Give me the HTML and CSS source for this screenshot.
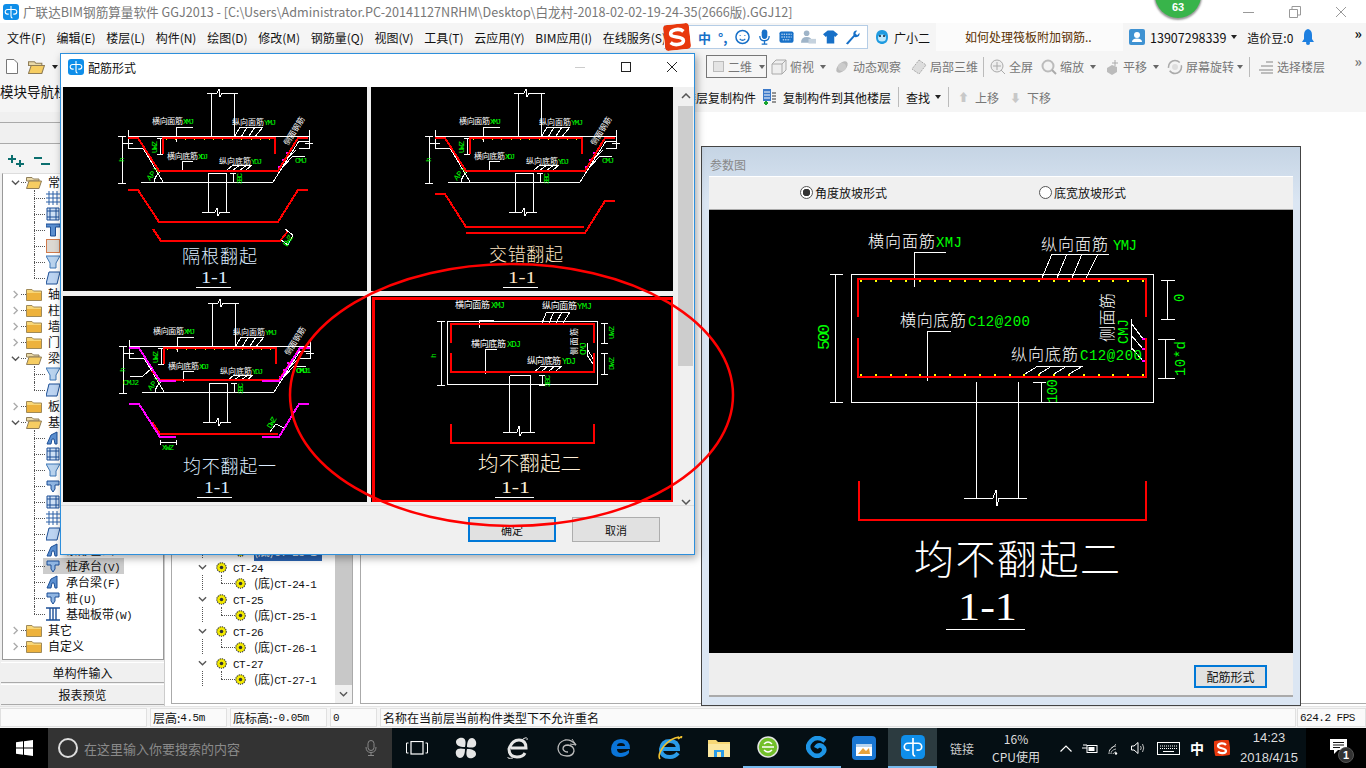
FILE: index.html
```html
<!DOCTYPE html>
<html lang="zh-CN">
<head>
<meta charset="utf-8">
<title>广联达BIM钢筋算量软件</title>
<link rel="stylesheet" href="styles.css">
</head>
<body>
<svg class="defs" width="0" height="0" aria-hidden="true">
  <defs>
    <symbol id="gld" viewBox="0 0 16 16"><rect width="16" height="16" rx="3" fill="#0f8ee9"/><path d="M8 2V12Q8 14 9.500 14M8 5.500H11.500A2.300 2.300 0 0 1 11.500 10.100H10.300M8 5.500H4.500A2.300 2.300 0 0 0 4.500 10.100H5.700" fill="none" stroke="#fff" stroke-width="1.100"/></symbol>
    <symbol id="folder" viewBox="0 0 16 14"><path d="M.5 2.5H6L7.5 4H15.5V13.5H.5Z" fill="#f8d676" stroke="#a08a58"/><path d="M1 6H15V13H1Z" fill="#edb23c"/></symbol>
    <symbol id="folderopen" viewBox="0 0 16 14"><path d="M.5 2.5H6L7.5 4H13V6H.5Z" fill="#e9d9a8" stroke="#8f7d58"/><path d="M3 6H15.5L13 13.5H.5Z" fill="#f6cd62" stroke="#8f7d58"/></symbol>
    <symbol id="i-grid" viewBox="0 0 14 14"><path d="M3 0V14M7 0V14M11 0V14M0 3H14M0 7H14M0 11H14" stroke="#2a60a8" fill="none"/></symbol>
    <symbol id="i-frame" viewBox="0 0 14 14"><path d="M1 1H13V13H1ZM4 4H10V10H4ZM1 4H4M10 4H13M1 10H4M10 10H13M4 1V4M10 1V4M4 10V13M10 10V13" fill="#cfe0f5" stroke="#1c4f96"/></symbol>
    <symbol id="i-t" viewBox="0 0 14 14"><path d="M0 1H14V4H9.5V13H4.5V4H0Z" fill="#5b8fd0" stroke="#1c4f96"/></symbol>
    <symbol id="i-sand" viewBox="0 0 14 14"><rect x=".5" y=".5" width="13" height="13" fill="#dcd8d2" stroke="#d07a4c"/></symbol>
    <symbol id="i-fun" viewBox="0 0 14 14"><path d="M0 1H14L10 8V13H4V8Z" fill="#b9d3ee" stroke="#3d77b5"/></symbol>
    <symbol id="i-slab" viewBox="0 0 14 14"><path d="M3 1H14L11 13H0Z" fill="#bcd4f2" stroke="#1c4f96"/></symbol>
    <symbol id="i-cap" viewBox="0 0 14 14"><path d="M1 13L5 4L11 1V13H9L8 8H6L5 13Z" fill="#5b8fd0" stroke="#1c4f96"/></symbol>
    <symbol id="i-pile" viewBox="0 0 14 14"><path d="M1 2H13V6H9V10L7 13L5 10V6H1Z" fill="#8fb5e2" stroke="#1c4f96"/></symbol>
    <symbol id="i-strip" viewBox="0 0 14 14"><path d="M0 1H14M0 13H14M4 1V13M7 1V13M10 1V13" fill="none" stroke="#1c4f96" stroke-width="1.4"/></symbol>
    <symbol id="ct" viewBox="0 0 10 10"><circle cx="5" cy="5" r="4.3" fill="#f3ea00" stroke="#333" stroke-dasharray="1.2 .8"/><circle cx="5" cy="5" r="1.6" fill="#333"/></symbol>
    <g id="slope-base">
      <path class="cw" d="M207 93H217L219 89L220 97L222 93H238M211 93V136M234 93V136M128 136H309M128 130V148H143L163 182M141 182H273L299 141H309M309 130V148H299M208 173H226M208 173V212M226 173V212M202 212H215L217 208L218 216L220 212H230"/>
      <path class="cw" d="M123 143H133M305 143H313M122 136V183M118 136H126M118 183H126M160 138V154M157 138H163M157 154H163M154 182Q155 176 160 172M233 173V182M230 173H236M230 182H236"/>
      <path class="cw" d="M193 127H176V142M240 127H263M233 139L240 127M240 139L247 127M247 139L255 127M253 139L263 127M193 161H182V172M233 165H252M227 170L233 165M233 170L240 165M240 170L247 165M246 170L252 165M293 156H305M280 170L293 156M283 162L296 150"/>
      <circle class="mg" cx="287" cy="153" r=".8"/><circle class="mg" cx="283" cy="160" r=".8"/><circle class="mg" cx="279" cy="167" r=".8"/>
      <path class="cy" d="M166 139H274"/>
      <path class="cy" d="M162 170H277"/>
      <path class="cr" d="M163 154V138H275V154"/>
      <text class="tw" x="152" y="124" textLength="31">横向面筋</text><text class="tg" x="183" y="124" textLength="11">XMJ</text>
      <text class="tw" x="232" y="125" textLength="32">纵向面筋</text><text class="tg" x="264" y="125" textLength="12">YMJ</text>
      <text class="tw" x="167" y="159" textLength="31">横向底筋</text><text class="tg" x="198" y="159" textLength="10">XDJ</text>
      <text class="tw" x="219" y="164" textLength="32">纵向底筋</text><text class="tg" x="251" y="164" textLength="11">YDJ</text>
      <text class="tg" x="295" y="163" textLength="12">CMJ</text>
      <text class="tg" transform="translate(157 153) rotate(-90)" textLength="12">UWZ</text>
      <text class="tg" transform="translate(124 162) rotate(-90)">h</text>
      <text class="tg" transform="translate(150 181) rotate(-50)">AP)</text>
      <text class="tg" transform="translate(242 184) rotate(-90)" textLength="11">3BC</text>
      <text class="tw" transform="translate(288 146) rotate(-58)" textLength="32">侧面钢筋</text>
    </g>
  </defs>
</svg>

<div class="screen">
  <header class="titlebar">
    <svg class="ic16"><use href="#gld"/></svg>
    <span class="title-text">广联达BIM钢筋算量软件 GGJ2013 - [C:\Users\Administrator.PC-20141127NRHM\Desktop\白龙村-2018-02-02-19-24-35(2666版).GGJ12]</span>
    <div class="winctl">
      <svg width="12" height="12"><path d="M0 6.5H11" stroke="#999"/></svg>
      <svg width="12" height="12"><path d="M.5 3.5H8.5V11.5H.5ZM3 3V.5H11.5V9H9" fill="none" stroke="#999"/></svg>
      <svg width="12" height="12"><path d="M1 1L11 11M11 1L1 11" stroke="#999"/></svg>
    </div>
  </header>

  <nav class="menubar">
    <div class="menu-items">
      <span>文件(F)</span><span>编辑(E)</span><span>楼层(L)</span><span>构件(N)</span><span>绘图(D)</span><span>修改(M)</span><span>钢筋量(Q)</span><span>视图(V)</span><span>工具(T)</span><span>云应用(Y)</span><span>BIM应用(I)</span><span>在线服务(S)</span>
    </div>
    <div class="sogou">
      <svg class="sg-logo" viewBox="0 0 26 26"><rect width="26" height="26" rx="4" fill="#e8380d"/><path d="M20 8C16 4 7 5 7 9.500C7 14 19 12 19 17C19 21 10 22 6 18" fill="none" stroke="#fff" stroke-width="3.600"/></svg>
      <span class="sg-zh">中</span>
      <span class="sg-dot">°,</span>
      <svg class="sg" viewBox="0 0 16 16"><circle cx="8" cy="8" r="7" fill="#fff" stroke="#1770c8" stroke-width="1.600"/><path d="M5 10Q8 13 11 10M5.500 6V7M10.500 6V7" fill="none" stroke="#1770c8" stroke-width="1.400"/></svg>
      <svg class="sg" viewBox="0 0 16 16"><rect x="5" y="0" width="6" height="10" rx="3" fill="#1770c8"/><path d="M3 7Q3 12 8 12T13 7M8 12V16M5 15.500H11" fill="none" stroke="#1770c8" stroke-width="1.400"/></svg>
      <svg class="sg" viewBox="0 0 16 16"><rect x=".5" y="2" width="15" height="12" rx="2" fill="#1770c8"/><path d="M2.500 5H13.500M2.500 8H13.500M4 11H12" stroke="#fff" stroke-dasharray="1.500 1" fill="none"/></svg>
      <svg class="sg" viewBox="0 0 16 16"><circle cx="6" cy="4" r="3" fill="#9fb4c8"/><path d="M0 14Q0 8 6 8T12 14Z" fill="#9fb4c8"/><rect x="8" y="10" width="8" height="5" fill="#c5d2de"/></svg>
      <svg class="sg" viewBox="0 0 16 16"><path d="M5 1H11L16 5L13 8L12 7V15H4V7L3 8L0 5Z" fill="#1770c8"/></svg>
      <svg class="sg" viewBox="0 0 16 16"><path d="M1 15L9 6Q8 1 13 1L11 4L13 6L15.500 3.500Q16 9 10 8L3 16Z" fill="#1770c8"/></svg>
    </div>
    <svg class="ghost" viewBox="0 0 16 16"><path d="M8 1C3 1 2 5 2 8C2 13 5 15 8 15S14 13 14 8C14 5 13 1 8 1Z" fill="#1f9be0"/><ellipse cx="8" cy="9" rx="4" ry="3.500" fill="#bfe8fb"/><circle cx="6" cy="7" r="1" fill="#123"/><circle cx="10" cy="7" r="1" fill="#123"/></svg>
    <span class="xiao">广小二</span>
    <div class="tip">如何处理筏板附加钢筋..</div>
    <svg class="avatar" viewBox="0 0 16 16"><rect width="16" height="16" rx="2" fill="#3f92d2"/><circle cx="8" cy="6" r="3" fill="#fff"/><path d="M3 13Q3 9.500 8 9.500T13 13Z" fill="#fff"/></svg>
    <span class="phone">13907298339</span><i class="caret dark"></i>
    <span class="bean">造价豆:0</span>
    <svg class="bell" viewBox="0 0 12 16"><path d="M6 0Q10 1 10 6V10L12 13H0L2 10V6Q2 1 6 0Z" fill="#1d7fe0"/><circle cx="6" cy="14" r="2" fill="#1d7fe0"/></svg>
    <span class="more">»</span>
  </nav>

  <div class="tb1">
    <div class="tb1-left">
      <svg width="12" height="15"><path d="M.5 .5H8L11.500 4V14.500H.5Z" fill="#fff" stroke="#777"/></svg>
      <svg width="17" height="15"><use href="#folderopen"/></svg>
      <i class="caret dark"></i>
    </div>
    <div class="mode"><span class="mode-box"></span><span>二维</span><i class="caret"></i></div>
    <div class="ti first"><svg class="tic" viewBox="0 0 16 16"><path d="M1 5L5 1H15V11L11 15H1ZM1 5H11V15M11 5L15 1" fill="#eee" stroke="#aaa"/></svg><span>俯视</span></div><i class="caret tight"></i>
    <div class="ti"><svg class="tic" viewBox="0 0 16 16"><ellipse cx="8" cy="8" rx="4" ry="7" transform="rotate(45 8 8)" fill="#bbb"/><circle cx="8" cy="8" r="4" fill="#ccc"/></svg><span>动态观察</span></div>
    <div class="ti sp2"><svg class="tic" viewBox="0 0 16 16"><path d="M8 1L15 6L8 15L1 10Z" fill="#ddd" stroke="#aaa" stroke-dasharray="2 1"/></svg><span>局部三维</span></div>
    <i class="sep s3"></i>
    <div class="ti m2"><svg class="tic" viewBox="0 0 16 16"><circle cx="7" cy="7" r="6" fill="#eee" stroke="#aaa"/><path d="M7 3V11M3 7H11M11 11L15 15" stroke="#aaa" fill="none"/></svg><span>全屏</span></div>
    <div class="ti"><svg class="tic" viewBox="0 0 16 16"><circle cx="7" cy="7" r="5.500" fill="#f3f3f3" stroke="#bbb" stroke-width="2"/><path d="M11 11L15 15" stroke="#aaa" stroke-width="2"/></svg><span>缩放</span></div><i class="caret tight"></i>
    <div class="ti"><svg class="tic" viewBox="0 0 16 16"><path d="M3 9L8 6L13 8V13L8 16L3 13Z" fill="#bbb"/><path d="M11 1V7M8 4H14" stroke="#aaa"/></svg><span>平移</span></div><i class="caret tight"></i>
    <div class="ti"><svg class="tic" viewBox="0 0 16 16"><circle cx="8" cy="8" r="6.500" fill="#f3f3f3" stroke="#aaa" stroke-width="1.500" stroke-dasharray="16 3"/><circle cx="8" cy="8" r="3" fill="#ddd"/></svg><span>屏幕旋转</span></div><i class="caret tighter"></i>
    <i class="sep s2"></i>
    <div class="ti"><svg class="tic" viewBox="0 0 16 16"><path d="M8 3H15M3 7H15M1 11H15M3 14H15" stroke="#aaa" stroke-width="1.500" fill="none"/></svg><span>选择楼层</span></div>
    <span class="more">»</span>
  </div>

  <div class="tb2">
    <div class="tb2-left"><span class="navtitle">模块导航栏</span></div>
    <span>楼层复制构件</span>
    <svg class="copy" viewBox="0 0 13 16"><rect x="0" y="0" width="8" height="12" fill="#3b79c9"/><path d="M1 3H7M1 6H7M1 9H7" stroke="#fff"/><path d="M3 12V16M1 14H5" stroke="#1aa531" stroke-width="2"/><path d="M9 4H13M9 7H13M9 10H13M9 13H13" stroke="#333"/></svg>
    <span>复制构件到其他楼层</span>
    <i class="sep"></i>
    <span>查找</span><i class="caret dark tight2"></i>
    <i class="sep"></i>
    <span class="arrow">⬆</span><span class="dis">上移</span>
    <span class="arrow">⬇</span><span class="dis">下移</span>
  </div>

  <main class="work">
    <aside class="nav">
      <div class="navtab t1"></div>
      <div class="navtab t2"></div>
      <div class="navtools">
        <svg width="20" height="12"><path d="M1 4H9M5 0V8M9 9H17M13 5V13" stroke="#0b6e6e" stroke-width="2"/></svg>
        <svg width="18" height="12"><path d="M0 3H8M7 9H16" stroke="#0b6e6e" stroke-width="2"/></svg>
      </div>
      <div class="tree">
        <div class="row folder open"><svg class="chev" viewBox="0 0 10 10"><path d="M1 3L5 7L9 3" fill="none" stroke="#555" stroke-width="1.500"/></svg><svg class="fd"><use href="#folderopen"/></svg><span>常用构件类型</span></div>
        <div class="row leaf"><svg class="li"><use href="#i-grid"/></svg><span>轴网</span></div>
        <div class="row leaf"><svg class="li"><use href="#i-frame"/></svg><span>框架柱</span></div>
        <div class="row leaf"><svg class="li"><use href="#i-t"/></svg><span>框架梁</span></div>
        <div class="row leaf"><svg class="li"><use href="#i-sand"/></svg><span>现浇板</span></div>
        <div class="row leaf"><svg class="li"><use href="#i-fun"/></svg><span>板受力筋</span></div>
        <div class="row leaf last"><svg class="li"><use href="#i-slab"/></svg><span>板负筋</span></div>
        <div class="row folder"><svg class="chev" viewBox="0 0 10 10"><path d="M3 1L7 5L3 9" fill="none" stroke="#aaa" stroke-width="1.500"/></svg><svg class="fd"><use href="#folder"/></svg><span>轴线</span></div>
        <div class="row folder"><svg class="chev" viewBox="0 0 10 10"><path d="M3 1L7 5L3 9" fill="none" stroke="#aaa" stroke-width="1.500"/></svg><svg class="fd"><use href="#folder"/></svg><span>柱</span></div>
        <div class="row folder"><svg class="chev" viewBox="0 0 10 10"><path d="M3 1L7 5L3 9" fill="none" stroke="#aaa" stroke-width="1.500"/></svg><svg class="fd"><use href="#folder"/></svg><span>墙</span></div>
        <div class="row folder"><svg class="chev" viewBox="0 0 10 10"><path d="M3 1L7 5L3 9" fill="none" stroke="#aaa" stroke-width="1.500"/></svg><svg class="fd"><use href="#folder"/></svg><span>门窗洞</span></div>
        <div class="row folder open"><svg class="chev" viewBox="0 0 10 10"><path d="M1 3L5 7L9 3" fill="none" stroke="#555" stroke-width="1.500"/></svg><svg class="fd"><use href="#folderopen"/></svg><span>梁</span></div>
        <div class="row leaf"><svg class="li"><use href="#i-fun"/></svg><span>梁</span></div>
        <div class="row leaf last"><svg class="li"><use href="#i-slab"/></svg><span>圈梁</span></div>
        <div class="row folder"><svg class="chev" viewBox="0 0 10 10"><path d="M3 1L7 5L3 9" fill="none" stroke="#aaa" stroke-width="1.500"/></svg><svg class="fd"><use href="#folder"/></svg><span>板</span></div>
        <div class="row folder open"><svg class="chev" viewBox="0 0 10 10"><path d="M1 3L5 7L9 3" fill="none" stroke="#555" stroke-width="1.500"/></svg><svg class="fd"><use href="#folderopen"/></svg><span>基础</span></div>
        <div class="row leaf"><svg class="li"><use href="#i-cap"/></svg><span>基础梁</span></div>
        <div class="row leaf"><svg class="li"><use href="#i-frame"/></svg><span>筏板基础</span></div>
        <div class="row leaf"><svg class="li"><use href="#i-fun"/></svg><span>集水坑</span></div>
        <div class="row leaf"><svg class="li"><use href="#i-pile"/></svg><span>柱墩</span></div>
        <div class="row leaf"><svg class="li"><use href="#i-frame"/></svg><span>筏板主筋</span></div>
        <div class="row leaf"><svg class="li"><use href="#i-grid"/></svg><span>筏板负筋</span></div>
        <div class="row leaf"><svg class="li"><use href="#i-slab"/></svg><span>独立基础</span></div>
        <div class="row leaf"><svg class="li"><use href="#i-cap"/></svg><span>条形基础</span></div>
        <div class="row leaf sel"><svg class="li"><use href="#i-pile"/></svg><span>桩承台<b>(V)</b></span></div>
        <div class="row leaf"><svg class="li"><use href="#i-cap"/></svg><span>承台梁<b>(F)</b></span></div>
        <div class="row leaf"><svg class="li"><use href="#i-pile"/></svg><span>桩<b>(U)</b></span></div>
        <div class="row leaf last"><svg class="li"><use href="#i-strip"/></svg><span>基础板带<b>(W)</b></span></div>
        <div class="row folder"><svg class="chev" viewBox="0 0 10 10"><path d="M3 1L7 5L3 9" fill="none" stroke="#aaa" stroke-width="1.500"/></svg><svg class="fd"><use href="#folder"/></svg><span>其它</span></div>
        <div class="row folder"><svg class="chev" viewBox="0 0 10 10"><path d="M3 1L7 5L3 9" fill="none" stroke="#aaa" stroke-width="1.500"/></svg><svg class="fd"><use href="#folder"/></svg><span>自定义</span></div>
      </div>
      <button class="navbtn">单构件输入</button>
      <button class="navbtn">报表预览</button>
    </aside>

    <section class="list">
      <div class="list-rows">
        <div class="ct child hl"><svg class="cti"><use href="#ct"/></svg><span>(底)<b>CT-23-1</b></span></div>
        <div class="ct"><svg class="chev2" viewBox="0 0 10 6"><path d="M1 1L5 5L9 1" fill="none" stroke="#555" stroke-width="1.500"/></svg><svg class="cti"><use href="#ct"/></svg><b>CT-24</b></div>
        <div class="ct child"><svg class="cti"><use href="#ct"/></svg><span>(底)<b>CT-24-1</b></span></div>
        <div class="ct"><svg class="chev2" viewBox="0 0 10 6"><path d="M1 1L5 5L9 1" fill="none" stroke="#555" stroke-width="1.500"/></svg><svg class="cti"><use href="#ct"/></svg><b>CT-25</b></div>
        <div class="ct child"><svg class="cti"><use href="#ct"/></svg><span>(底)<b>CT-25-1</b></span></div>
        <div class="ct"><svg class="chev2" viewBox="0 0 10 6"><path d="M1 1L5 5L9 1" fill="none" stroke="#555" stroke-width="1.500"/></svg><svg class="cti"><use href="#ct"/></svg><b>CT-26</b></div>
        <div class="ct child"><svg class="cti"><use href="#ct"/></svg><span>(底)<b>CT-26-1</b></span></div>
        <div class="ct"><svg class="chev2" viewBox="0 0 10 6"><path d="M1 1L5 5L9 1" fill="none" stroke="#555" stroke-width="1.500"/></svg><svg class="cti"><use href="#ct"/></svg><b>CT-27</b></div>
        <div class="ct child"><svg class="cti"><use href="#ct"/></svg><span>(底)<b>CT-27-1</b></span></div>
      </div>
      <div class="vscroll"><div class="vthumb"></div><svg class="vdown" viewBox="0 0 10 6"><path d="M1 1L5 5L9 1" fill="none" stroke="#555" stroke-width="1.500"/></svg></div>
    </section>

    <section class="canvas"></section>
  </main>

  <footer class="status">
    <div class="cell c0"></div>
    <div class="cell c1">层高:<b>4.5m</b></div>
    <div class="cell c2">底标高:<b>-0.05m</b></div>
    <div class="cell c3"><b>0</b></div>
    <div class="cell c4">名称在当前层当前构件类型下不允许重名</div>
    <div class="cell c5"><b>624.2 FPS</b></div>
  </footer>

  <div class="taskbar">
    <div class="start"><svg width="17" height="16" viewBox="0 0 17 16"><path d="M0 2.300L7 1.300V7.500H0ZM8 1.200L17 0V7.500H8ZM0 8.500H7V14.700L0 13.700ZM8 8.500H17V16L8 14.800Z" fill="#fff"/></svg></div>
    <div class="search">
      <span class="cortana"></span><span class="stext">在这里输入你要搜索的内容</span>
      <svg class="mic" width="12" height="16" viewBox="0 0 12 16"><rect x="3" y=".5" width="6" height="10" rx="3" fill="none" stroke="#888"/><path d="M1 7Q1 12.500 6 12.500T11 7M6 12.500V15.500M3 15.500H9" fill="none" stroke="#888"/></svg>
    </div>
    <div class="tasks">
      <div class="task"><svg width="22" height="14" viewBox="0 0 22 14"><rect x="5" y=".5" width="12" height="12.500" fill="none" stroke="#fff" stroke-width="1.200"/><path d="M2.500 2H.5V12H2.500M19.500 2H21.500V12H19.500" fill="none" stroke="#fff"/></svg></div>
      <div class="task"><svg width="22" height="22" viewBox="0 0 22 22"><path d="M10 10C4 10 1 8 1 5S5 0 8 1 11 6 10 10ZM12 10C12 4 14 1 17 1S22 5 21 8 16 11 12 10ZM12 12C18 12 21 14 21 17S17 22 14 21 11 16 12 12ZM10 12C10 18 8 21 5 21S0 17 1 14 6 11 10 12Z" fill="#e6e6e6"/></svg></div>
      <div class="task"><svg width="22" height="24" viewBox="0 0 22 24"><path d="M4 12H19Q19 4 12 4T2 13Q2 21 10 21Q16 21 18 17" fill="none" stroke="#e6e6e6" stroke-width="3"/><path d="M1 21Q0 23 6 22M16 3Q21 0 20 4" fill="none" stroke="#e6e6e6"/></svg></div>
      <div class="task"><svg width="20" height="20" viewBox="0 0 20 20"><path d="M19 7Q14 1 8 2Q1 4 1 11Q2 18 10 18Q16 18 17 13Q17 8 11 7Q6 7 6 11Q7 14 11 14" fill="none" stroke="#bbb" stroke-width="1.300"/><path d="M15 1L19 7L13 6" fill="none" stroke="#bbb"/></svg></div>
      <div class="task"><svg width="22" height="22" viewBox="0 0 22 22"><path d="M3 12H20Q20 2 11 2T1 12Q1 20 10 20Q16 20 19 16V13Q15 16 11 16Q7 16 7 12ZM7 9Q7 6 11 6T15 9Z" fill="#0a74d8" fill-rule="evenodd"/></svg></div>
      <div class="task"><svg width="26" height="26" viewBox="0 0 26 26"><path d="M5 14H21Q21 6 13 6T4 14Q4 22 13 22Q18 22 21 18" fill="none" stroke="#2a9be8" stroke-width="4"/><path d="M21 4Q26 0 24 3M3 24Q0 20 7 11Q14 3 22 2" fill="none" stroke="#f2c230" stroke-width="1.600"/></svg></div>
      <div class="task"><svg width="22" height="18" viewBox="0 0 22 18"><path d="M0 1H8L10 3H22V18H0Z" fill="#f6d776"/><rect x="0" y="5" width="22" height="13" fill="#fbe7a0"/><rect x="6" y="11" width="10" height="7" fill="#2a9be8"/><rect x="9" y="13" width="4" height="5" fill="#fbe7a0"/></svg></div>
      <div class="task"><svg width="22" height="22" viewBox="0 0 22 22"><circle cx="11" cy="11" r="10" fill="#72bf2a" stroke="#e5e5e5" stroke-width="1.500"/><path d="M5 11H17M7 8Q11 4 15 8M7 14Q11 18 15 14" fill="none" stroke="#fff" stroke-width="1.500"/></svg></div>
      <div class="task"><svg width="22" height="22" viewBox="0 0 22 22"><path d="M19 5Q11 -1 5 5Q-1 11 5 17Q11 23 17 17Q20 13 16 10Q12 8 10 12" fill="none" stroke="#1e95e6" stroke-width="4.500"/></svg></div>
      <div class="task"><svg width="24" height="24" viewBox="0 0 24 24"><rect width="24" height="24" rx="4" fill="#1976d2"/><path d="M4 8H20V20H4Z" fill="#fff"/><path d="M4 8H20V11H4Z" fill="#b7d4f0"/><path d="M6 18L11 12L14 15L17 12L18 18Z" fill="#e8a33c"/></svg></div>
      <div class="task active"><svg width="24" height="24"><use href="#gld"/></svg></div>
    </div>
    <div class="linktxt">链接</div>
    <div class="cpu"><span>16%</span><span>CPU使用</span></div>
    <div class="tray">
      <svg width="12" height="7" viewBox="0 0 12 7"><path d="M.5 6.500L6 1L11.500 6.500" fill="none" stroke="#fff" stroke-width="1.200"/></svg>
      <svg width="16" height="10" viewBox="0 0 16 10"><rect x="5" y="2.500" width="10" height="7" fill="none" stroke="#fff"/><rect x="6.500" y="4" width="6" height="4" fill="#fff"/><path d="M0 5H5M2 1V3M4 1V3" stroke="#fff"/></svg>
      <svg width="13" height="13" viewBox="0 0 13 13"><path d="M1 12Q1 5 8 4M3 12Q3 8 8 7M5 12Q6 10 8 10M1 9L8 2" fill="none" stroke="#ddd" stroke-dasharray="1.500 .5"/><circle cx="8" cy="11.500" r="1.200" fill="#fff"/></svg>
      <svg width="16" height="12" viewBox="0 0 16 12"><path d="M.5 4H3L7 .5V11.500L3 8H.5Z" fill="none" stroke="#fff"/><path d="M9.500 4Q11 6 9.500 8M11.500 2Q14 6 11.500 10" fill="none" stroke="#bbb"/></svg>
      <svg width="23" height="13" viewBox="0 0 23 13"><rect x=".5" y=".5" width="22" height="12" fill="none" stroke="#fff"/><path d="M3 4H20M3 6.500H20" stroke="#fff" stroke-dasharray="1 1"/><path d="M6 9.500H17" stroke="#fff"/></svg>
      <span class="tray-zh">中</span>
      <svg width="16" height="16" viewBox="0 0 16 16"><rect width="16" height="16" rx="3" fill="#e8380d" transform="rotate(-8 8 8)"/><path d="M12 5C10 2.500 4 3 4 6C4 9 12 7.500 12 11C12 13.500 6 14 4 11.500" fill="none" stroke="#fff" stroke-width="2.200"/></svg>
    </div>
    <div class="clock"><span>14:23</span><span>2018/4/15</span></div>
    <div class="notice"><svg width="17" height="15" viewBox="0 0 17 15"><path d="M0 0H17V11H8L4 15V11H0Z" fill="#fff"/><path d="M3 3.500H14M3 6H14M3 8.500H10" stroke="#111"/></svg><span class="badge">1</span></div>
  </div>
</div>

<div class="ball"><span>63</span></div>

<div class="param">
  <div class="p-title">参数图</div>
  <div class="p-radios">
    <label class="radio"><span class="dot on"></span>角度放坡形式</label>
    <label class="radio"><span class="dot"></span>底宽放坡形式</label>
  </div>
  <svg class="p-cad cad" viewBox="709 210 584 443">
    <rect class="cw" x="851.500" y="274.500" width="302" height="128"/>
    <path class="cw" d="M946 252H914V287M1109 254H1052L1042 278M1067 254L1057 278M1082 254L1072 278M1098 254L1086 278M951 331H927V381M1083 366H1038L1025 374M1052 366L1039 374M1067 366L1054 374M1083 366L1069 374"/>
    <path class="cw" d="M835 274V402M830 274.500H843M830 402H843M1167 280V319M1161 280H1175M1161 319H1175M1165 339V378M1158 339H1175M1158 378H1175M1041 382V402M1033 382H1046M1033 402H1046"/>
    <path class="cw" d="M1131 319V350M1131 323L1143 339M1131 335L1143 349M1131 347L1143 361"/>
    <path class="cw" d="M976.500 382V498M1018.500 382V498M964 498H993L996 490L997 506L999 498H1027"/>
    <path class="cy2" d="M860 280.500H1146M860 374.500H1146"/>
    <path class="cr" d="M858 317V279H1146V317M858 338V377H1146V338"/>
    <path class="cr" d="M858.500 481V519.500H1146V481"/>
    <circle class="mg" cx="1143.500" cy="339" r="1.300"/><circle class="mg" cx="1143.500" cy="349" r="1.300"/><circle class="mg" cx="1143.500" cy="361" r="1.300"/>
    <text class="tw f16" x="868" y="247" textLength="67">横向面筋</text><text class="tg f14" x="936" y="247" textLength="26">XMJ</text>
    <text class="tw f16" x="1041" y="250" textLength="67">纵向面筋</text><text class="tg f14" x="1113" y="250" textLength="24">YMJ</text>
    <text class="tw f16" x="900" y="326" textLength="66">横向底筋</text><text class="tg f14" x="968" y="326" textLength="62">C12@200</text>
    <text class="tw f16" x="1011" y="360" textLength="67">纵向底筋</text><text class="tg f14" x="1080" y="360" textLength="62">C12@200</text>
    <text class="tw f16" transform="translate(1113 342) rotate(-90)" textLength="49">侧面筋</text>
    <text class="tg f14" transform="translate(1128 344) rotate(-90)" textLength="25">CMJ</text>
    <text class="tg f16" transform="translate(829 350) rotate(-90)" textLength="26">500</text>
    <text class="tg f14" transform="translate(1184 302) rotate(-90)">0</text>
    <text class="tg f14" transform="translate(1185 376) rotate(-90)" textLength="35">10*d</text>
    <text class="tg f14" transform="translate(1057 403) rotate(-90)" textLength="24">100</text>
    <text class="tt" x="914" y="574" textLength="206">均不翻起二</text>
    <text class="tn" x="958" y="620" textLength="59" lengthAdjust="spacingAndGlyphs">1-1</text>
    <path class="cw" d="M946 629H1025"/>
  </svg>
  <div class="p-foot"><button class="p-btn">配筋形式</button></div>
</div>

<div class="dlg">
  <div class="d-title">
    <svg class="ic16"><use href="#gld"/></svg>
    <span class="d-name">配筋形式</span>
    <div class="d-ctl">
      <svg width="12" height="12"><path d="M1 6.500H11" stroke="#ccc"/></svg>
      <svg width="12" height="12"><rect x="1.500" y="1.500" width="9" height="9" fill="none" stroke="#222"/></svg>
      <svg width="12" height="12"><path d="M1 1L11 11M11 1L1 11" stroke="#222"/></svg>
    </div>
  </div>
  <div class="d-body">
    <div class="d-grid">
      <svg class="cad" viewBox="63 87 304 204">
        <use href="#slope-base"/>
        <path class="cr" d="M128 138H138L159 171H278L298 138H308"/>
        <path class="cr" d="M128 190H138L159 222H278L298 190H308M153 229L161 241H280L288 231"/>
        <path class="cw" d="M285 229L293 235L288 245L281 240"/>
        <text class="tg" transform="translate(287 247) rotate(-58)" textLength="12">DWZ</text>
        <text class="pt tint1" x="182" y="263" textLength="75">隔根翻起</text>
        <text class="pn tint1" x="201" y="283" textLength="27" lengthAdjust="spacingAndGlyphs">1-1</text>
        <path class="cw" d="M196 287H231"/>
      </svg>
      <svg class="cad" viewBox="371 87 302 204">
        <use href="#slope-base" transform="translate(307 0)"/>
        <path class="cr" d="M435 138H445L466 171H585L605 138H615"/>
        <path class="cr" d="M435 194H445L466 227H584M466 233H585L605 201H615"/>
        <text class="pt tint2" x="489" y="261" textLength="74">交错翻起</text>
        <text class="pn tint2" x="508" y="283" textLength="28" lengthAdjust="spacingAndGlyphs">1-1</text>
        <path class="cw" d="M503 287H538"/>
      </svg>
      <svg class="cad" viewBox="63 296 304 206">
        <use href="#slope-base" transform="translate(1 210)"/>
        <path class="cr" d="M152 371L160 380H279L300 348"/>
        <path class="cm" d="M129 348H139L160 381H176M262 381H279L300 348H310"/>
        <path class="cr" d="M152 422L160 434H278"/>
        <path class="cm" d="M129 404H139L160 437H176M262 437H279L299 404H309"/>
        <path class="cw" d="M160 442H176M160 440V445M176 440V445M270 432L276 424L284 428M130 376H143L152 368"/>
        <text class="tg" x="162" y="450" textLength="12">XWZ</text>
        <text class="tg" x="123" y="385" textLength="16">CMJ2</text>
        <text class="tg" x="296" y="373" textLength="15">CMJ1</text>
        <text class="tg" transform="translate(271 429) rotate(-60)" textLength="12">DWZ</text>
        <text class="pt tint1" x="183" y="473" textLength="93">均不翻起一</text>
        <text class="pn tint1" x="204" y="493" textLength="26" lengthAdjust="spacingAndGlyphs">1-1</text>
        <path class="cw" d="M197 497H232"/>
      </svg>
      <svg class="cad" viewBox="371 296 302 206">
        <rect class="cw" x="447.500" y="321.500" width="150" height="63"/>
        <path class="cw" d="M509.500 375.500H530.500M509.500 375.500V432M530.500 375.500V432M503 432H517L519 426L520 436L522 432H535"/>
        <path class="cw" d="M494 320H479.500V328M546.500 312H570M542 323L546.500 312M549 323L554 312M556 323L562 312M563 323L570 312M496.500 349H485V374M541.500 366H561.500M534 372L541.500 366M541 372L548 366M548 372L555 366M555 372L561.500 366"/>
        <path class="cw" d="M441 321V385M437 321.500H445M437 385H445M604.500 323V343M601 323H608M601 343H608M604.500 353V374M601 353H608M601 374H608M542 375V385M539 375H545M539 385H545M587 343V355L593 364M587 349L594 360"/>
        <path class="cy" d="M452 323.700H593M452 371H593"/>
        <path class="cr" d="M451 343V323.500H594V343M451 353V372H594V353"/>
        <path class="cr" d="M451 424V442.500H594V424"/>
        <text class="tw f9" x="455" y="308" textLength="35">横向面筋</text><text class="tg f9" x="491" y="308" textLength="14">XMJ</text>
        <text class="tw f9" x="542" y="309" textLength="35">纵向面筋</text><text class="tg f9" x="577" y="309" textLength="15">YMJ</text>
        <text class="tw f9" x="471" y="347" textLength="35">横向底筋</text><text class="tg f9" x="507" y="347" textLength="14">XDJ</text>
        <text class="tw f9" x="527" y="364" textLength="34">纵向底筋</text><text class="tg f9" x="562" y="364" textLength="14">YDJ</text>
        <text class="tw" transform="translate(577 355) rotate(-90)" textLength="27">侧面筋</text>
        <text class="tg f9" transform="translate(586 355) rotate(-90)" textLength="13">CMJ</text>
        <text class="tg" transform="translate(436 358) rotate(-90)">h</text>
        <text class="tg" transform="translate(614 339) rotate(-90)" textLength="13">UWZ</text>
        <text class="tg" transform="translate(614 370) rotate(-90)" textLength="13">DWZ</text>
        <text class="tg" transform="translate(550 387) rotate(-90)" textLength="12">3BC</text>
        <text class="pt big tint3" x="478" y="471" textLength="103">均不翻起二</text>
        <text class="pn tint3" x="501" y="493" textLength="29" lengthAdjust="spacingAndGlyphs">1-1</text>
        <path class="cw" d="M495 497H534"/>
        <rect class="frame" x="373" y="298" width="299" height="203"/>
      </svg>
    </div>
    <div class="d-scroll">
      <svg width="10" height="6" viewBox="0 0 10 6"><path d="M1 5L5 1L9 5" fill="none" stroke="#555" stroke-width="1.500"/></svg>
      <div class="d-thumb"></div>
      <svg width="10" height="6" viewBox="0 0 10 6"><path d="M1 1L5 5L9 1" fill="none" stroke="#555" stroke-width="1.500"/></svg>
    </div>
  </div>
  <div class="d-foot">
    <button class="d-btn primary">确定</button>
    <button class="d-btn">取消</button>
  </div>
</div>

<svg class="circle" width="1366" height="768" viewBox="0 0 1366 768"><ellipse cx="511.500" cy="395" rx="221.500" ry="131" fill="none" stroke="#f00" stroke-width="2.500"/></svg>
</body>
</html>
```
FILE: styles.css
```css
* { box-sizing: border-box; }
html, body { margin: 0; padding: 0; width: 1366px; height: 768px; overflow: hidden; }
body { position: relative; font: 12px "Noto Sans CJK SC", "Liberation Sans", sans-serif; color: #111; background: #fff; }
.defs { position: absolute; }
svg { display: block; flex: none; }
button { font: inherit; color: inherit; }

.screen { width: 1366px; height: 768px; display: flex; flex-direction: column; }

.titlebar { height: 23px; background: #fff; display: flex; align-items: center; padding-left: 3px; color: #777; }
.ic16 { width: 16px; height: 16px; }
.title-text { margin-left: 4px; font-size: 12.620px; white-space: nowrap; }
.winctl { margin-left: auto; display: flex; gap: 34px; padding-right: 19px; align-items: center; }

.menubar { height: 28px; background: #f5f5f5; display: flex; align-items: center; }
.menu-items { width: 664px; padding-left: 7px; display: flex; gap: 10.700px; white-space: nowrap; }
.sogou { width: 204px; height: 24px; border: 1px solid #b5cde6; border-left: 0; background: #fff; display: flex; align-items: center; gap: 7px; position: relative; }
.sg-logo { width: 26px; height: 26px; margin-top: -1px; margin-right: 1px; transform: rotate(-6deg); }
.sg { width: 15px; height: 16px; }
.sg-zh { color: #1770c8; font-weight: 700; font-size: 13px; width: 13px; }
.sg-dot { color: #1770c8; font-weight: 700; width: 10px; font-size: 13px; }
.ghost { width: 16px; height: 16px; margin-left: 6px; }
.xiao { margin-left: 4px; }
.tip { margin-left: 6px; width: 187px; height: 28px; background: #fbfbfb; color: #5a3000; line-height: 28px; padding-left: 29px; white-space: nowrap; }
.avatar { width: 16px; height: 16px; margin-left: 6px; }
.phone { margin-left: 5px; font-size: 12.500px; }
.bean { margin-left: 10px; }
.bell { width: 12px; height: 16px; margin-left: 9px; }
.more { margin-left: auto; padding-right: 4px; font-size: 14px; line-height: 14px; font-weight: 700; align-self: flex-start; margin-top: 3px; }

.caret { display: block; width: 0; height: 0; border: 3px solid transparent; border-top: 4px solid #666; border-bottom: 0; flex: none; }
.caret.dark { border-top-color: #222; margin-left: 5px; }
.caret.tight { margin-left: -2px; }
.caret.tighter { margin-left: -5px; }
.caret.tight2 { margin-left: -2px; }

.tb1 { height: 31px; background: #f5f5f5; display: flex; align-items: center; gap: 8px; color: #777; }
.tb1-left { width: 698px; display: flex; align-items: center; gap: 10px; padding-left: 6px; }
.tb1-left .caret { margin-left: -3px; }
.mode { width: 61px; height: 23px; border: 1px solid #777; display: flex; align-items: center; padding-left: 6px; gap: 4px; }
.mode-box { width: 11px; height: 11px; background: #e4e4e4; border: 1px solid #bbb; }
.mode .caret { margin-left: 3px; }
.ti { display: flex; align-items: center; gap: 3px; white-space: nowrap; }
.ti.first { margin-left: -4px; }
.ti.sp2 { margin-left: 2px; }
.ti.m2 { margin-left: -2px; }
.tic { width: 16px; height: 16px; }
.sep { display: block; width: 1px; height: 20px; background: #bbb; flex: none; }
.sep.s3 { margin-left: -3px; }
.sep.s2 { margin-left: -2px; }

.tb2 { height: 30px; background: #f5f5f5; display: flex; align-items: center; gap: 7px; }
.tb2-left { width: 677px; height: 30px; }
.navtitle { display: block; font-size: 13.500px; height: 18px; line-height: 18px; white-space: nowrap; }
.copy { width: 13px; height: 16px; }
.arrow { color: #c8c8c8; font-size: 11px; margin-left: 2px; width: 10px; }
.dis { color: #777; margin-right: 2px; }

.work { flex: 1; min-height: 0; display: flex; }
.nav { width: 165px; background: #f0f0f0; display: flex; flex-direction: column; border-right: 1px solid #ccc; }
.navtab { background: #f0f0f0; border-bottom: 1px solid #aaa; }
.t1 { height: 11px; }
.t2 { height: 20px; margin-top: 1px; }
.navtools { height: 29px; background: #f4f4f4; display: flex; align-items: center; gap: 7px; padding: 5px 0 0 7px; }
.tree { height: 487px; margin: 0 0 2px 2px; background: #fff; border: 1px solid #999; border-top: 1px solid #ddd; overflow: hidden; }
.row { height: 16px; display: flex; align-items: center; position: relative; white-space: nowrap; }
.row span { line-height: 16px; }
.row b { font: 400 11px "Liberation Mono", monospace; letter-spacing: -.6px; }
.folder { padding-left: 8px; }
.chev { width: 9px; height: 9px; margin-right: 6px; }
.fd { width: 16px; height: 14px; margin-right: 6px; }
.folder::after { content: ""; position: absolute; left: 18px; top: 8px; width: 5px; border-top: 1px dotted #555; }
.leaf { padding-left: 43px; }
.li { width: 14px; height: 14px; margin-right: 6px; }
.leaf::before { content: ""; position: absolute; left: 31px; top: 0; height: 16px; border-left: 1px dotted #555; }
.leaf.last::before { height: 8px; }
.leaf::after { content: ""; position: absolute; left: 31px; top: 8px; width: 11px; border-top: 1px dotted #555; }
.sel { background: linear-gradient(#ccc, #ccc) 40px 0 / 81px 100% no-repeat; }
.navbtn { height: 21px; margin: 0 0 1px 1px; width: 163px; background: #f0f0f0; border: 0; border-top: 1px solid #fff; border-bottom: 1px solid #aaa; padding: 0; }

.list { width: 182px; margin: 0 7px 2px 6px; background: #fff; border: 1px solid #aaa; border-top: 0; display: flex; justify-content: flex-end; }
.list-rows { flex: 1; display: flex; flex-direction: column; justify-content: flex-end; padding-bottom: 16px; min-width: 0; }
.ct { height: 16px; display: flex; align-items: center; white-space: nowrap; padding-left: 26px; position: relative; }
.ct b { font: 400 11px/16px "Liberation Mono", monospace; letter-spacing: -.6px; }
.ct > b { margin-top: 3px; }
.ct > span { line-height: 16px; margin-top: 2px; }
.chev2 { width: 9px; height: 6px; margin-right: 9px; }
.cti { width: 11px; height: 11px; margin-right: 6px; }
.ct.child { padding-left: 63px; background: repeating-linear-gradient(#555 0 1px, transparent 1px 2px) 30px 0 / 1px 100% no-repeat; }
.ct.child .cti { margin-right: 8px; }
.ct.child::before { content: ""; position: absolute; left: 49px; top: 0; height: 8px; border-left: 1px dotted #555; }
.ct.child::after { content: ""; position: absolute; left: 49px; top: 8px; width: 14px; border-top: 1px dotted #555; }
.hl span { background: #2a62b0; color: #fff; padding-right: 6px; }
.vscroll { width: 17px; background: #f0f0f0; display: flex; flex-direction: column; }
.vthumb { flex: 1; background: #c8c8c8; margin-bottom: 0; }
.vdown { width: 9px; height: 6px; margin: 6px 4px 6px; }

.canvas { flex: 1; margin-bottom: 2px; background: #fff; border-left: 1px solid #aaa; border-bottom: 1px solid #aaa; }

.status { height: 22px; background: #f5f5f5; display: flex; padding: 1px 0; gap: 3px; white-space: nowrap; border-top: 1px solid #e4e4e4; }
.cell { border: 1px solid #e0e0e0; background: #fafafa; display: flex; align-items: center; padding-left: 2px; }
.cell b { font: 400 11px "Liberation Mono", monospace; letter-spacing: -.5px; }
.c0 { width: 147px; }
.c1 { width: 77px; }
.c2 { width: 97px; }
.c3 { width: 47px; }
.c4 { flex: 1; }
.c5 { width: 69px; margin-left: -2px; }

.taskbar { height: 40px; background: #050f14; display: flex; align-items: center; color: #fff; white-space: nowrap; }
.start { width: 48px; height: 40px; background: #000; display: flex; align-items: center; justify-content: center; }
.search { width: 344px; height: 40px; background: #333; display: flex; align-items: center; padding-left: 10px; }
.cortana { width: 20px; height: 20px; border: 2.500px solid #ddd; border-radius: 50%; }
.stext { margin-left: 6px; color: #8a8a8a; font-size: 13px; }
.mic { margin-left: auto; margin-right: 15px; }
.tasks { display: flex; height: 40px; }
.task { width: 49px; height: 40px; display: flex; align-items: center; justify-content: center; }
.task:nth-child(3) { margin-left: 3px; }
.task:nth-child(5) { margin-left: 5px; }
.task:nth-child(10) { margin-left: -2px; }
.task.active { background: #2c3b40; border-bottom: 2px solid #76b9ed; }
.task:nth-child(8), .task:nth-child(9) { border-bottom: 2px solid #76b9ed; }
.linktxt { margin-left: 13px; color: #ccc; width: 25px; }
.cpu { margin-left: 15px; width: 52px; display: flex; flex-direction: column; align-items: center; line-height: 18px; color: #ddd; }
.tray { margin-left: 18px; width: 172px; display: flex; align-items: center; gap: 10px; }
.tray-zh { font-size: 14px; font-weight: 700; }
.clock { margin-left: 7px; width: 60px; display: flex; flex-direction: column; align-items: center; font: 13px/20px "Liberation Sans", sans-serif; color: #ddd; }
.notice { margin-left: auto; width: 60px; height: 40px; position: relative; display: flex; align-items: center; padding-left: 24px; padding-bottom: 4px; background: #000; }
.badge { position: absolute; left: 32px; top: 19px; width: 16px; height: 16px; border-radius: 50%; background: #333; font: 700 11px/16px "Liberation Sans", sans-serif; text-align: center; border: 1px solid #555; line-height: 14px; }

.ball { position: absolute; left: 1155px; top: -28px; width: 46px; height: 46px; border-radius: 50%; background: #38b44a; box-shadow: 0 1px 2px 1px #999; color: #fff; font: 700 11px "Liberation Sans", sans-serif; text-align: center; padding-top: 29px; }

.param { position: absolute; left: 701px; top: 146px; width: 600px; height: 560px; border: 1px solid #444; background: linear-gradient(#c5d4e4, #dbe6f3 10%); padding: 0 7px 8px; display: flex; flex-direction: column; }
.p-title { height: 29px; line-height: 35px; color: #888; font-size: 12px; padding-left: 1px; }
.p-radios { height: 34px; background: #f0f0f0; border-top: 1px solid #fff; border-bottom: 1px solid #aaa; display: flex; align-items: center; padding: 0 0 2px 91px; gap: 152px; }
.radio { display: flex; align-items: center; gap: 2px; white-space: nowrap; }
.dot { width: 13px; height: 13px; border-radius: 50%; border: 1px solid #555; background: #fff; display: block; position: relative; }
.dot.on { background: radial-gradient(circle, #333 0 3.500px, #fff 4px); }
.p-cad { width: 584px; height: 443px; background: #000; }
.p-foot { flex: 1; background: #eee; border-bottom: 2px solid #aaa; display: flex; justify-content: flex-end; align-items: flex-start; padding: 12px 26px 0 0; }
.p-btn { width: 73px; height: 23px; padding: 0; background: #e1e1e1; border: 2px solid #0078d7; }

.dlg { position: absolute; left: 60px; top: 53px; width: 635px; height: 502px; border: 1px solid #2d8fdc; background: #f0f0f0; box-shadow: 2px 3px 8px rgba(0,0,0,.35); display: flex; flex-direction: column; }
.d-title { height: 33px; background: #fff; display: flex; align-items: center; padding: 0 0 7px 7px; flex: none; }
.d-name { margin-left: 4px; }
.d-ctl { margin-left: auto; display: flex; gap: 34px; padding-right: 16px; }
.d-body { height: 418px; display: flex; padding-left: 2px; flex: none; }
.d-grid { width: 610px; display: grid; grid-template-columns: 304px 302px; grid-template-rows: 204px 206px; gap: 5px 4px; align-self: flex-start; }
.d-grid svg { width: 100%; height: 100%; background: #000; }
.d-scroll { width: 18px; margin-left: 4px; height: 418px; display: flex; flex-direction: column; align-items: center; padding-top: 6px; gap: 7px; background: #f0f0f0; }
.d-thumb { width: 15px; height: 262px; background: #cdcdcd; margin-bottom: 126px; }
.d-foot { flex: 1; background: #f0f0f0; border-top: 1px solid #ddd; display: flex; padding: 11px 0 0 407px; gap: 16px; align-items: flex-start; }
.d-btn { width: 88px; height: 25px; padding: 0; background: #e1e1e1; border: 1px solid #adadad; font-size: 11px; }
.d-btn.primary { border: 2px solid #0078d7; }

.circle { position: absolute; left: 0; top: 0; pointer-events: none; }

.cad { shape-rendering: crispEdges; }
.cw { fill: none; stroke: #fff; stroke-width: 1; }
.cr { fill: none; stroke: #f00; stroke-width: 2; }
.cm { fill: none; stroke: #f0f; stroke-width: 2; }
.cy { fill: none; stroke: #ff0; stroke-width: 1; stroke-dasharray: 1 8.400; }
.cy2 { fill: none; stroke: #ff0; stroke-width: 2; stroke-dasharray: 2 12.850; }
.mg { fill: #f0f; }
.tw { fill: #fff; font: 8px "Noto Sans CJK SC", sans-serif; }
.tg { fill: #0f0; font: 8px "Liberation Mono", monospace; }
.f9 { font-size: 9px; }
.f14 { font-size: 14px; }
.f16 { font-size: 16px; font-weight: 300; }
.tg.f16 { font-size: 17px; }
.pt { font: 300 18px "Noto Sans CJK SC", sans-serif; fill: #fff; }
.pt.big { font-size: 20.500px; }
.pn { font: 17px "Liberation Serif", serif; fill: #fff; }
.tt { font: 300 40px "Noto Sans CJK SC", sans-serif; fill: #fff; }
.tn { font: 40px "Liberation Serif", serif; fill: #fff; }
.tint1 { fill: #dcecff; }
.tint2 { fill: #ffe6c4; }
.tint3 { fill: #fff0d8; }
.frame { fill: none; stroke: #f00; stroke-width: 3; }
```
